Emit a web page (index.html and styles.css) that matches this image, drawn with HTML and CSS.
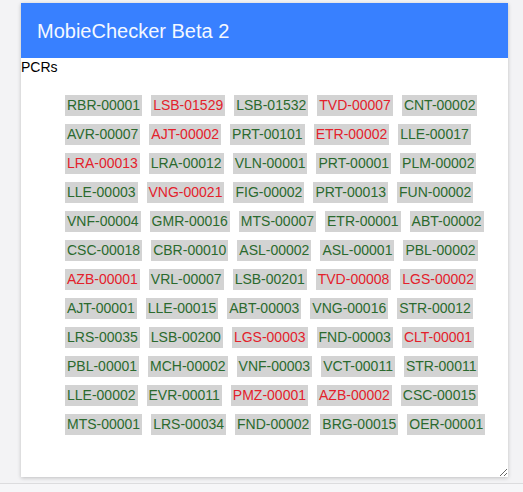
FILE: index.html
```html
<!DOCTYPE html>
<html>
<head>
<meta charset="utf-8">
<link rel="stylesheet" href="styles.css">
</head>
<body>
<div class="page">
  <div class="card">
    <div class="toolbar">MobieChecker Beta 2</div>
    <div class="label">PCRs</div>
    <div class="chips">
      <span class="chip ok">RBR-00001</span>
      <span class="chip bad">LSB-01529</span>
      <span class="chip ok">LSB-01532</span>
      <span class="chip bad">TVD-00007</span>
      <span class="chip ok">CNT-00002</span>
      <span class="chip ok">AVR-00007</span>
      <span class="chip bad">AJT-00002</span>
      <span class="chip ok">PRT-00101</span>
      <span class="chip bad">ETR-00002</span>
      <span class="chip ok">LLE-00017</span>
      <span class="chip bad">LRA-00013</span>
      <span class="chip ok">LRA-00012</span>
      <span class="chip ok">VLN-00001</span>
      <span class="chip ok">PRT-00001</span>
      <span class="chip ok">PLM-00002</span>
      <span class="chip ok">LLE-00003</span>
      <span class="chip bad">VNG-00021</span>
      <span class="chip ok">FIG-00002</span>
      <span class="chip ok">PRT-00013</span>
      <span class="chip ok">FUN-00002</span>
      <span class="chip ok">VNF-00004</span>
      <span class="chip ok">GMR-00016</span>
      <span class="chip ok">MTS-00007</span>
      <span class="chip ok">ETR-00001</span>
      <span class="chip ok">ABT-00002</span>
      <span class="chip ok">CSC-00018</span>
      <span class="chip ok">CBR-00010</span>
      <span class="chip ok">ASL-00002</span>
      <span class="chip ok">ASL-00001</span>
      <span class="chip ok">PBL-00002</span>
      <span class="chip bad">AZB-00001</span>
      <span class="chip ok">VRL-00007</span>
      <span class="chip ok">LSB-00201</span>
      <span class="chip bad">TVD-00008</span>
      <span class="chip bad">LGS-00002</span>
      <span class="chip ok">AJT-00001</span>
      <span class="chip ok">LLE-00015</span>
      <span class="chip ok">ABT-00003</span>
      <span class="chip ok">VNG-00016</span>
      <span class="chip ok">STR-00012</span>
      <span class="chip ok">LRS-00035</span>
      <span class="chip ok">LSB-00200</span>
      <span class="chip bad">LGS-00003</span>
      <span class="chip ok">FND-00003</span>
      <span class="chip bad">CLT-00001</span>
      <span class="chip ok">PBL-00001</span>
      <span class="chip ok">MCH-00002</span>
      <span class="chip ok">VNF-00003</span>
      <span class="chip ok">VCT-00011</span>
      <span class="chip ok">STR-00011</span>
      <span class="chip ok">LLE-00002</span>
      <span class="chip ok">EVR-00011</span>
      <span class="chip bad">PMZ-00001</span>
      <span class="chip bad">AZB-00002</span>
      <span class="chip ok">CSC-00015</span>
      <span class="chip ok">MTS-00001</span>
      <span class="chip ok">LRS-00034</span>
      <span class="chip ok">FND-00002</span>
      <span class="chip ok">BRG-00015</span>
      <span class="chip ok">OER-00001</span>
    </div>
  </div>
</div>
<div class="footer"></div>
</body>
</html>
```

FILE: styles.css
```css
html, body {
  margin: 0;
  padding: 0;
}
body {
  background: #f3f3f5;
  font-family: "Liberation Sans", Arial, sans-serif;
  width: 523px;
  height: 492px;
  overflow: hidden;
}
.page {
  height: 483px;
  padding: 3px 0 0 21px;
  box-sizing: border-box;
}
.card {
  width: 487px;
  height: 474px;
  background: #fff;
  box-shadow: 0 1px 4px rgba(0, 0, 0, 0.22);
  resize: both;
  overflow: hidden;
  box-sizing: border-box;
}
.toolbar {
  height: 55px;
  background: #3880ff;
  color: #f4f8ff;
  font-size: 20px;
  line-height: 56px;
  padding-left: 16px;
}
.label {
  margin-top: 1px;
  font-size: 14px;
  line-height: 16px;
  color: #000;
}
.chips {
  display: flex;
  flex-wrap: wrap;
  gap: 8px 9px;
  padding: 20px 10px 0 44px;
  width: 440px;
}
.chip {
  background: #d3d3d3;
  font-size: 14px;
  line-height: 17px;
  padding: 2px 2px;
}
.ok {
  color: #2b6a2e;
}
.bad {
  color: #e3212b;
}
.footer {
  height: 9px;
  border-top: 1px solid #dcdcde;
  background: #f6f6f8;
}
```
